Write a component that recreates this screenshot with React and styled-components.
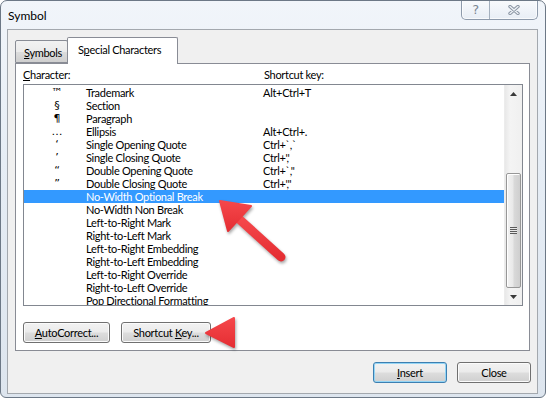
import React from 'react';
import styled, { createGlobalStyle } from 'styled-components';

const GlobalStyle = createGlobalStyle`
	html, body {
		margin: 0;
		padding: 0;
		background: #ffffff;
	}
	body {
		font-family: Lato, 'Liberation Sans', sans-serif;
		font-size: 11px;
		letter-spacing: -0.3px;
		color: #000;
	}
	* {
		box-sizing: border-box;
	}
`;

const Window = styled.div`
	position: relative;
	width: 546px;
	height: 398px;
	border: 1px solid #6c7886;
	border-radius: 7px 7px 6px 6px;
	background: linear-gradient(180deg, #f1f5fa 0%, #e6edf5 40%, #dde5ee 100%);
	padding: 0 7px 3px 6px;
	display: flex;
	flex-direction: column;
	overflow: hidden;
`;

const TitleBar = styled.div`
	height: 28px;
	display: flex;
	justify-content: space-between;
	align-items: flex-start;
	h1 {
		margin: 8px 0 0 1px;
		font-size: 12px;
		font-weight: 400;
		line-height: 14px;
		letter-spacing: 0;
		font-family: Lato, 'Liberation Sans', sans-serif;
	}
`;

const CaptionButtons = styled.div`
	display: flex;
	height: 20px;
	margin-top: -1px;
	border: 1px solid #8d9aab;
	border-top: none;
	border-radius: 0 0 5px 5px;
	background: linear-gradient(180deg, rgba(255, 255, 255, 0.55), rgba(230, 236, 244, 0.8));
	box-shadow: inset 0 0 0 1px rgba(255, 255, 255, 0.7);
	overflow: hidden;
`;

const CaptionButton = styled.div`
	width: ${(p) => p.$w}px;
	display: flex;
	align-items: center;
	justify-content: center;
	color: #7b8694;
	font-size: 13px;
	font-family: 'DejaVu Sans', sans-serif;
	& + & {
		border-left: 1px solid #a4b0be;
	}
`;

const Client = styled.div`
	flex: 1;
	background: #f0f0f0;
	border: 1px solid #a3a8ae;
	padding: 7px 6px 10px 7px;
	display: flex;
	flex-direction: column;
`;

const TabStrip = styled.div`
	display: flex;
	align-items: flex-end;
	height: 26px;
	position: relative;
	z-index: 2;
`;

const Tab = styled.div`
	width: ${(p) => p.$w}px;
	height: ${(p) => (p.$active ? 27 : 23)}px;
	margin-bottom: ${(p) => (p.$active ? -1 : 0)}px;
	margin-right: ${(p) => (p.$active ? 0 : -1)}px;
	padding: ${(p) => (p.$active ? '4px 0 0 10px' : '4px 0 0 8px')};
	border: 1px solid #898c95;
	border-bottom: ${(p) => (p.$active ? 'none' : '1px solid #898c95')};
	border-radius: 2px 2px 0 0;
	background: ${(p) =>
		p.$active
			? '#ffffff'
			: 'linear-gradient(180deg, #f2f2f2 0%, #ebebeb 50%, #dddddd 51%, #cfcfcf 100%)'};
	line-height: 15px;
	white-space: nowrap;
`;

const Panel = styled.div`
	height: 288px;
	margin-right: 1px;
	border: 1px solid #898c95;
	background: #ffffff;
	padding: 4px 6px 7px 7px;
	display: flex;
	flex-direction: column;
`;

const ColumnLabels = styled.div`
	display: flex;
	height: 14px;
	line-height: 14px;
	margin-bottom: 2px;
	span:first-child {
		width: 241px;
	}
`;

const ListBox = styled.div`
	height: 222px;
	border: 1px solid #828790;
	display: flex;
	overflow: hidden;
`;

const Rows = styled.div`
	flex: 1;
	padding-top: 1px;
`;

const Row = styled.div`
	display: flex;
	height: 13px;
	line-height: 13px;
	white-space: nowrap;
	background: ${(p) => (p.$selected ? '#3399ff' : 'transparent')};
	color: ${(p) => (p.$selected ? '#ffffff' : '#000000')};
`;

const SymbolCell = styled.span`
	width: 62px;
	padding-left: 4px;
	text-align: center;
	font-family: 'DejaVu Sans', sans-serif;
	font-size: 11px;
	letter-spacing: 0;
`;

const NameCell = styled.span`
	width: 177px;
`;

const KeyCell = styled.span`
	flex: 1;
`;

const ScrollBar = styled.div`
	width: 18px;
	display: flex;
	flex-direction: column;
	background: linear-gradient(90deg, #e8e8e8 0%, #f4f4f4 30%, #f0f0f0 100%);
	border-left: 1px solid #ececec;
`;

const ArrowButton = styled.div`
	height: 17px;
	display: flex;
	align-items: center;
	justify-content: center;
	svg {
		display: block;
	}
`;

const Track = styled.div`
	flex: 1;
	padding: 0 1px 0 1px;
`;

const Thumb = styled.div`
	margin-top: ${(p) => p.$top}px;
	height: ${(p) => p.$height}px;
	border: 1px solid #979797;
	border-radius: 2px;
	background: linear-gradient(90deg, #f3f3f3 0%, #e9e9e9 45%, #d9d9d9 55%, #cfcfcf 100%);
	box-shadow: inset 1px 1px 0 #ffffff;
	display: flex;
	align-items: center;
	justify-content: center;
`;

const Grip = styled.div`
	width: 7px;
	height: 7px;
	background: repeating-linear-gradient(180deg, #5a5a5a 0 1px, #e8e8e8 1px 2px);
`;

const ButtonRow = styled.div`
	display: flex;
	gap: ${(p) => p.$gap}px;
	justify-content: ${(p) => (p.$right ? 'flex-end' : 'flex-start')};
	margin-top: ${(p) => p.$top}px;
`;

const Button = styled.div`
	width: ${(p) => p.$w}px;
	height: 21px;
	display: flex;
	align-items: center;
	justify-content: center;
	border: 1px solid ${(p) => (p.$default ? '#3c7fb1' : '#707070')};
	border-radius: 3px;
	background: linear-gradient(180deg, #f2f2f2 0%, #ebebeb 48%, #dddddd 52%, #cfcfcf 100%);
	box-shadow: inset 0 0 0 1px ${(p) => (p.$default ? '#94d5f5' : '#fbfbfb')};
	line-height: 15px;
	white-space: nowrap;
	padding-bottom: 1px;
`;

const Overlay = styled.svg`
	position: absolute;
	left: -1px;
	top: -1px;
	pointer-events: none;
	filter: drop-shadow(1px 2px 1.5px rgba(0, 0, 0, 0.35));
`;

const entries = [
	['™', 'Trademark', 'Alt+Ctrl+T'],
	['§', 'Section', ''],
	['¶', 'Paragraph', ''],
	['…', 'Ellipsis', 'Alt+Ctrl+.'],
	['‘', 'Single Opening Quote', 'Ctrl+`,`'],
	['’', 'Single Closing Quote', "Ctrl+','"],
	['“', 'Double Opening Quote', 'Ctrl+`,"'],
	['”', 'Double Closing Quote', "Ctrl+',\""],
	['', 'No-Width Optional Break', ''],
	['', 'No-Width Non Break', ''],
	['', 'Left-to-Right Mark', ''],
	['', 'Right-to-Left Mark', ''],
	['', 'Left-to-Right Embedding', ''],
	['', 'Right-to-Left Embedding', ''],
	['', 'Left-to-Right Override', ''],
	['', 'Right-to-Left Override', ''],
	['', 'Pop Directional Formatting', ''],
];

function CloseGlyph() {
	return (
		<svg width="12" height="10" viewBox="0 0 12 10">
			<path d="M2 1.5 L10 8.5 M10 1.5 L2 8.5" stroke="#8a95a3" strokeWidth="3.4" strokeLinecap="round" />
			<path d="M2 1.5 L10 8.5 M10 1.5 L2 8.5" stroke="#eef2f7" strokeWidth="1.4" strokeLinecap="round" />
		</svg>
	);
}

function Arrows() {
	return (
		<Overlay width="546" height="399" viewBox="0 0 546 399">
			<defs>
				<linearGradient id="red" x1="0" y1="0" x2="0" y2="1">
					<stop offset="0" stopColor="#f5474b" />
					<stop offset="1" stopColor="#e52e33" />
				</linearGradient>
			</defs>
			<line x1="239" y1="219" x2="281" y2="257" stroke="url(#red)" strokeWidth="9" strokeLinecap="round" />
			<polygon points="220,201 251,206 228,231" fill="url(#red)" stroke="url(#red)" strokeWidth="2" strokeLinejoin="round" />
			<line x1="230" y1="332" x2="285" y2="332" stroke="url(#red)" strokeWidth="8.5" strokeLinecap="round" />
			<polygon points="206,333 234,318 234,347" fill="url(#red)" stroke="url(#red)" strokeWidth="2" strokeLinejoin="round" />
		</Overlay>
	);
}

export default function App() {
	return (
		<>
			<GlobalStyle />
			<Window>
				<TitleBar>
					<h1>Symbol</h1>
					<CaptionButtons>
						<CaptionButton $w={27}>?</CaptionButton>
						<CaptionButton $w={48}>
							<CloseGlyph />
						</CaptionButton>
					</CaptionButtons>
				</TitleBar>
				<Client>
					<TabStrip>
						<Tab $w={53}>
							<u>S</u>ymbols
						</Tab>
						<Tab $w={111} $active>
							S<u>p</u>ecial Characters
						</Tab>
					</TabStrip>
					<Panel>
						<ColumnLabels>
							<span>
								<u>C</u>haracter:
							</span>
							<span>Shortcut key:</span>
						</ColumnLabels>
						<ListBox>
							<Rows>
								{entries.map(([sym, name, key], i) => (
									<Row key={name} $selected={i === 8}>
										<SymbolCell>{sym}</SymbolCell>
										<NameCell>{name}</NameCell>
										<KeyCell>{key}</KeyCell>
									</Row>
								))}
							</Rows>
							<ScrollBar>
								<ArrowButton>
									<svg width="7" height="4" viewBox="0 0 7 4">
										<polygon points="0,4 3.5,0 7,4" fill="#3a3a3a" />
									</svg>
								</ArrowButton>
								<Track>
									<Thumb $top={71} $height={115}>
										<Grip />
									</Thumb>
								</Track>
								<ArrowButton>
									<svg width="7" height="4" viewBox="0 0 7 4">
										<polygon points="0,0 7,0 3.5,4" fill="#3a3a3a" />
									</svg>
								</ArrowButton>
							</ScrollBar>
						</ListBox>
						<ButtonRow $gap={11} $top={16}>
							<Button $w={87}>
								<span>
									<u>A</u>utoCorrect...
								</span>
							</Button>
							<Button $w={90}>
								<span>
									Shortcut <u>K</u>ey...
								</span>
							</Button>
						</ButtonRow>
					</Panel>
					<ButtonRow $gap={10} $top={11} $right>
						<Button $w={74} $default>
							<span>
								<u>I</u>nsert
							</span>
						</Button>
						<Button $w={74}>Close</Button>
					</ButtonRow>
				</Client>
				<Arrows />
			</Window>
		</>
	);
}
